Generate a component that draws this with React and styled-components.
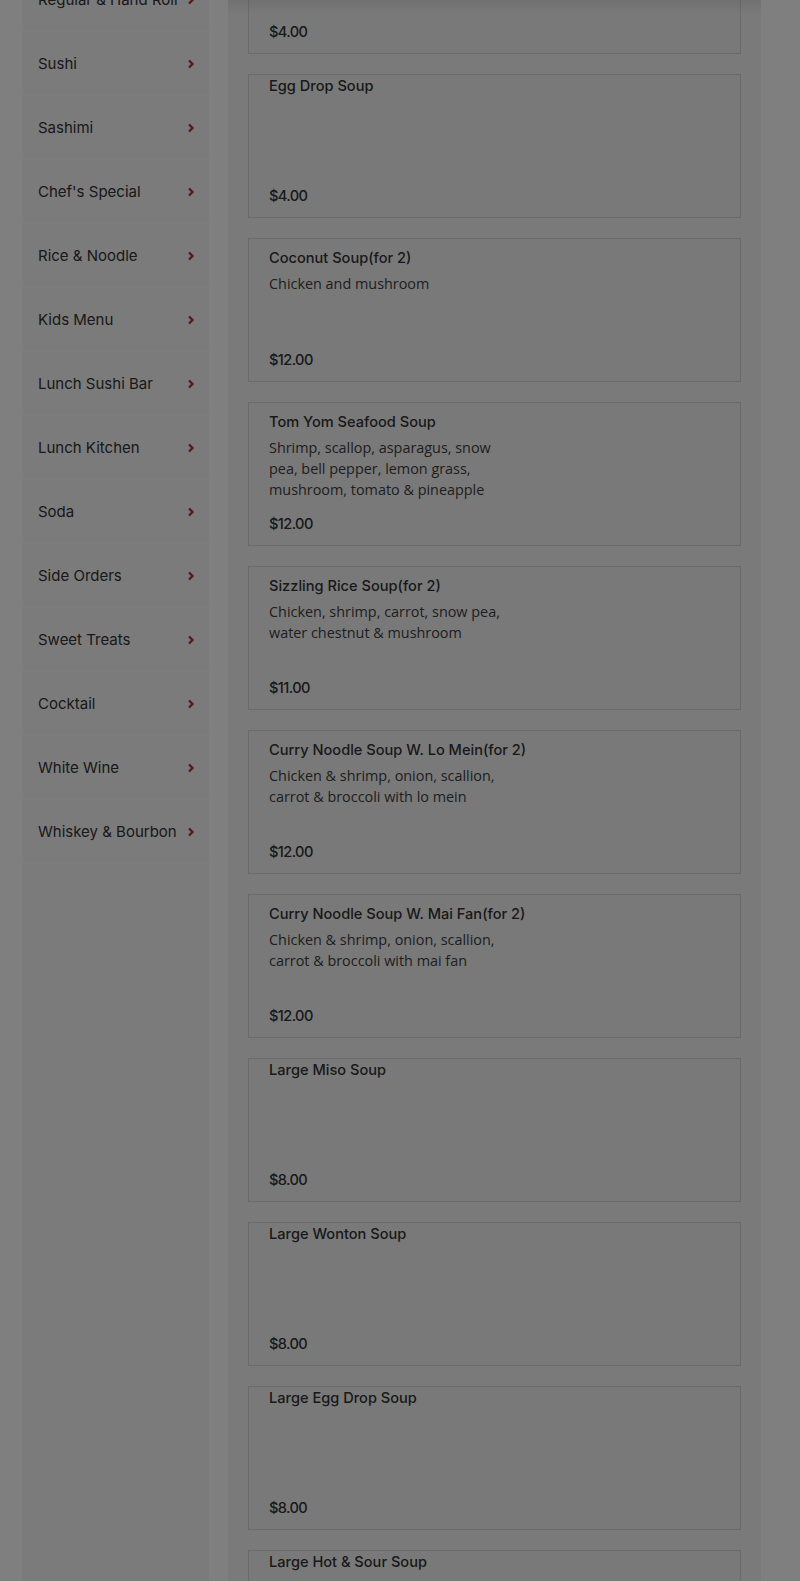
import React from 'react';
import styled, { createGlobalStyle } from 'styled-components';

// page is shown scrolled down into the Soup section, under a modal backdrop
const SCROLL = 438;

const GlobalStyle = createGlobalStyle`
  html, body {
    margin: 0;
    padding: 0;
    background: #ffffff;
  }
  body {
    font-family: Inter, "Liberation Sans", sans-serif;
    color: #333333;
    overflow: hidden;
  }
`;

const Page = styled.div`
  display: flex;
  align-items: stretch;
  gap: 19px;
  padding-left: 22px;
  margin-top: -${SCROLL}px;
  min-height: ${1581 + SCROLL}px;
`;

const Sidebar = styled.nav`
  width: 187px;
  flex: none;
  background: #f6f6f6;
  padding-top: 22px;
`;

const CategoryItem = styled.div`
  height: 64px;
  box-sizing: border-box;
  display: flex;
  align-items: center;
  justify-content: space-between;
  padding: 0 14px 0 16px;
  border-bottom: 1px solid #fafafa;
  font-family: Inter, "Liberation Sans", sans-serif;
  font-size: 15px;
  font-weight: 400;
  color: #333333;
  white-space: nowrap;
`;

const Chevron = styled.svg`
  width: 8px;
  height: 10px;
  flex: none;
`;

const Main = styled.main`
  width: 533px;
  flex: none;
  box-sizing: border-box;
  background: #f5f5f5;
  padding: 20px 20px 0;
  display: flex;
  flex-direction: column;
  gap: 20px;
`;

const Card = styled.article`
  height: 144px;
  box-sizing: border-box;
  border: 1px solid #d4d4d4;
  background: #f3f3f3;
  padding: ${({ $compact }) => ($compact ? '2px' : '10px')} 20px 11px;
  display: flex;
  flex-direction: column;
`;

const Title = styled.h3`
  margin: 0;
  font-family: Inter, "Liberation Sans", sans-serif;
  font-size: 14.6px;
  font-weight: 500;
  line-height: 19px;
  color: #333333;
`;

const Description = styled.p`
  margin: 5px 0 0;
  max-width: 240px;
  font-family: "Open Sans", "Noto Sans", sans-serif;
  font-size: 14.4px;
  line-height: 21px;
  color: #3d3d3d;
`;

const Price = styled.div`
  margin-top: auto;
  font-family: Inter, "Liberation Sans", sans-serif;
  font-size: 14.6px;
  font-weight: 500;
  line-height: 20px;
  letter-spacing: -0.6px;
  color: #333333;
`;

const TopShade = styled.div`
  position: fixed;
  top: 0;
  left: 228px;
  width: 533px;
  height: 14px;
  background: linear-gradient(rgba(0, 0, 0, 0.07), rgba(0, 0, 0, 0));
`;

const Backdrop = styled.div`
  position: fixed;
  inset: 0;
  background: rgba(0, 0, 0, 0.5);
`;

const categories = [
  'Appetizers',
  'Soup',
  'Salad',
  'Fried Rice',
  'Special Rolls',
  'Vegetable Roll',
  'Regular & Hand Roll',
  'Sushi',
  'Sashimi',
  "Chef's Special",
  'Rice & Noodle',
  'Kids Menu',
  'Lunch Sushi Bar',
  'Lunch Kitchen',
  'Soda',
  'Side Orders',
  'Sweet Treats',
  'Cocktail',
  'White Wine',
  'Whiskey & Bourbon',
];

const soups = [
  { name: 'Miso Soup', price: '$4.00' },
  { name: 'Wonton Soup', price: '$4.00' },
  { name: 'Hot & Sour Soup', price: '$4.00' },
  { name: 'Egg Drop Soup', price: '$4.00' },
  { name: 'Coconut Soup(for 2)', desc: 'Chicken and mushroom', price: '$12.00' },
  {
    name: 'Tom Yom Seafood Soup',
    desc: 'Shrimp, scallop, asparagus, snow pea, bell pepper, lemon grass, mushroom, tomato & pineapple',
    price: '$12.00',
  },
  {
    name: 'Sizzling Rice Soup(for 2)',
    desc: 'Chicken, shrimp, carrot, snow pea, water chestnut & mushroom',
    price: '$11.00',
  },
  {
    name: 'Curry Noodle Soup W. Lo Mein(for 2)',
    desc: 'Chicken & shrimp, onion, scallion, carrot & broccoli with lo mein',
    price: '$12.00',
  },
  {
    name: 'Curry Noodle Soup W. Mai Fan(for 2)',
    desc: 'Chicken & shrimp, onion, scallion, carrot & broccoli with mai fan',
    price: '$12.00',
  },
  { name: 'Large Miso Soup', price: '$8.00' },
  { name: 'Large Wonton Soup', price: '$8.00' },
  { name: 'Large Egg Drop Soup', price: '$8.00' },
  { name: 'Large Hot & Sour Soup', price: '$8.00' },
];

const ChevronIcon = () => (
  <Chevron viewBox="0 0 8 10">
    <polyline points="2,1.5 5.5,5 2,8.5" fill="none" stroke="#b83030" strokeWidth="2.4" />
  </Chevron>
);

const App = () => (
  <>
    <GlobalStyle />
    <Page>
      <Sidebar>
        {categories.map((c) => (
          <CategoryItem key={c}>
            <span>{c}</span>
            <ChevronIcon />
          </CategoryItem>
        ))}
      </Sidebar>
      <Main>
        {soups.map((s) => (
          <Card key={s.name} $compact={!s.desc}>
            <Title>{s.name}</Title>
            {s.desc && <Description>{s.desc}</Description>}
            <Price>{s.price}</Price>
          </Card>
        ))}
      </Main>
    </Page>
    <TopShade />
    <Backdrop />
  </>
);

export default App;
